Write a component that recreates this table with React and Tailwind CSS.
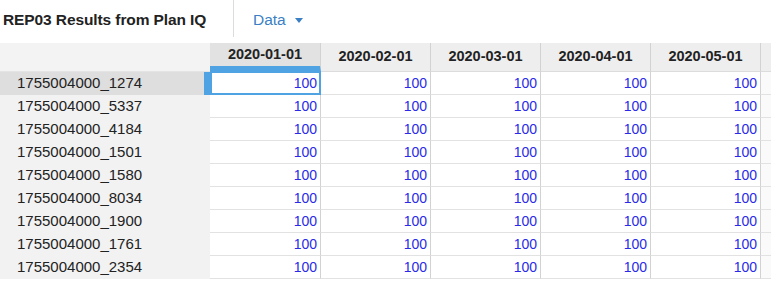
const cols = ['2020-01-01', '2020-02-01', '2020-03-01', '2020-04-01', '2020-05-01'];
const rows = ['1274', '5337', '4184', '1501', '1580', '8034', '1900', '1761', '2354'];

export default function App() {
  return (
    <div className="w-[771px] h-[282px] overflow-hidden bg-white" style={{ fontFamily: '"Liberation Sans", Arial, sans-serif' }}>
      {/* Toolbar */}
      <div className="flex h-[43px] items-start">
        <div className="h-[40px] w-[233px] pl-[3px] flex items-center text-[15.5px] font-bold text-[#222] tracking-[-0.1px]">
          REP03 Results from Plan IQ
        </div>
        <div className="h-[37px] border-l border-[#dcdcdc]" />
        <div className="h-[40px] pl-[19px] flex items-center gap-[9px] text-[15.5px] text-[#3b7fc4]">
          <span>Data</span>
          <svg width="8" height="5" viewBox="0 0 8 5" className="mt-[1px]">
            <path d="M0 0 L8 0 L4 5 Z" fill="#3b7fc4" />
          </svg>
        </div>
      </div>

      {/* Grid */}
      <div className="grid grid-cols-[210px_111px_110px_110px_110px_110px_110px] grid-rows-[29px_repeat(9,23px)]">
        <div className="bg-[#f3f3f3] border-b border-[#e4e4e4]" />
        {cols.map((c, i) => (
          <div
            key={c}
            className={
              i === 0
                ? 'bg-[#e2e2e2] border-r border-[#d2d2d2] border-b-[6px] border-b-[#4fa3e3] flex items-center justify-center pt-[5px] text-[14.5px] font-bold text-[#222]'
                : 'bg-[#eeeeee] border-r border-[#d2d2d2] border-b border-b-[#dcdcdc] flex items-center justify-center text-[14.5px] font-bold text-[#222]'
            }
          >
            {i === 0 ? <span className="-mt-[5px]">{c}</span> : c}
          </div>
        ))}
        <div className="bg-[#eeeeee] border-b border-[#dcdcdc]" />

        {rows.map((r, ri) => (
          <Row key={r} id={r} selected={ri === 0} />
        ))}
      </div>
    </div>
  );
}

function Row({ id, selected }) {
  return (
    <>
      <div
        className={
          selected
            ? 'bg-[#dedede] border-r-[6px] border-[#4fa3e3] flex items-center pl-[17px] text-[15px] text-[#222]'
            : 'bg-[#f2f2f2] flex items-center pl-[17px] text-[15px] text-[#222]'
        }
      >
        1755004000_{id}
      </div>
      {cols.map((c, i) => (
        <div
          key={c}
          className={
            selected && i === 0
              ? 'border-2 border-[#4fa3e3] -mt-[1px] flex items-center justify-end pr-[2px] text-[14px] text-[#2a2ae8]'
              : 'border-r border-b border-r-[#d2d2d2] border-b-[#e2e2e2] flex items-center justify-end pr-[3px] text-[14px] text-[#2a2ae8]'
          }
        >
          100
        </div>
      ))}
      <div className="border-b border-[#e2e2e2] bg-[#fafafa]" />
    </>
  );
}
